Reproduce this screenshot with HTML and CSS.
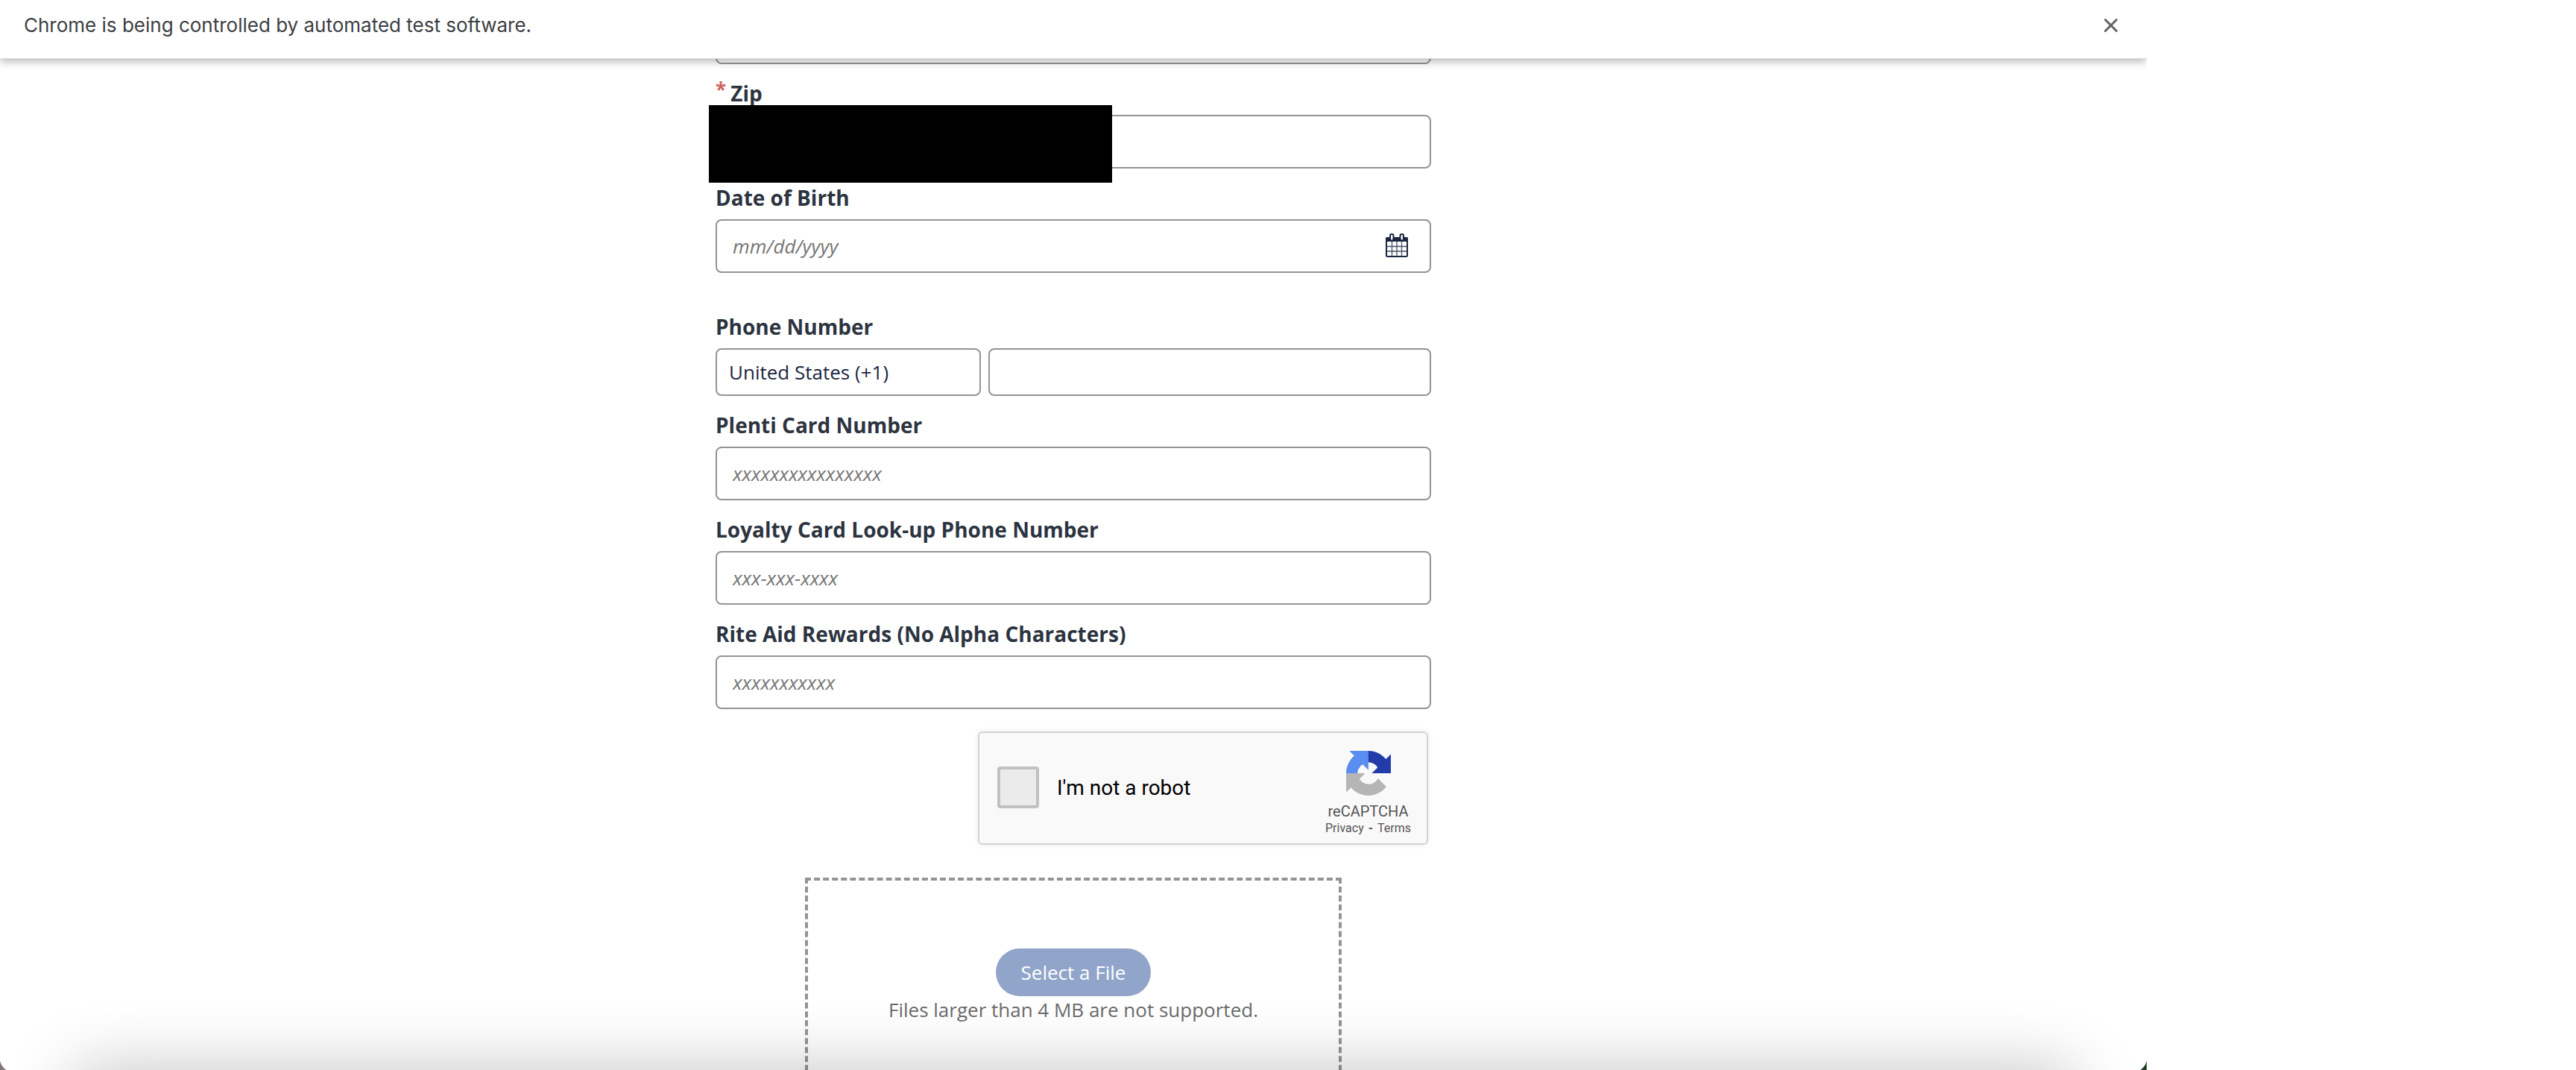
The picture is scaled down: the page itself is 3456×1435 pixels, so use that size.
FILE: index.html
```
<!DOCTYPE html>
<html lang="en">
<head>
<meta charset="utf-8">
<meta name="viewport" content="width=device-width, initial-scale=1">
<title>Contact form</title>
<link rel="stylesheet" href="styles.css">
</head>
<body>
<div class="window">
  <header class="infobar">
    <span>Chrome is being controlled by automated test software.</span>
    <button class="infobar-close" type="button" aria-label="Close">
      <svg width="20" height="20" viewBox="0 0 20 20" fill="none" stroke="#5f6368" stroke-width="3" stroke-linecap="round" aria-hidden="true"><path d="M2.5 2.5l15 15M17.5 2.5l-15 15"/></svg>
    </button>
  </header>

  <main class="page">
    <form class="form">
      <input class="field" type="text" aria-label="State">

      <label class="label" for="zip"><span class="required">*</span>Zip</label>
      <div class="control">
        <input class="field" id="zip" type="text" required>
        <div class="redaction"></div>
      </div>

      <label class="label" for="dob">Date of Birth</label>
      <div class="control">
        <input class="field" id="dob" type="text" placeholder="mm/dd/yyyy">
        <button class="calendar-button" type="button" aria-label="Open calendar">
          <svg width="30" height="32" viewBox="0 0 30 32" aria-hidden="true">
            <rect x="1" y="6" width="28" height="25" rx="1.5" fill="#fff" stroke="#1c2541" stroke-width="2"/>
            <path d="M0 11V7a2 2 0 0 1 2-2h26a2 2 0 0 1 2 2v4z" fill="#1c2541"/>
            <path d="M8.5 11v19M15 11v19M21.5 11v19M2 17.5h26M2 24h26" stroke="#1c2541" stroke-opacity=".8" stroke-width="1.3"/>
            <rect x="6" y="1" width="4.5" height="8.5" rx="2.2" fill="#fff" stroke="#1c2541" stroke-width="2"/>
            <rect x="19.5" y="1" width="4.5" height="8.5" rx="2.2" fill="#fff" stroke="#1c2541" stroke-width="2"/>
          </svg>
        </button>
      </div>

      <label class="label label-spaced" for="phone">Phone Number</label>
      <div class="phone-row">
        <select class="field field-short country" aria-label="Country code">
          <option>United States (+1)</option>
        </select>
        <input class="field field-short" id="phone" type="tel">
      </div>

      <label class="label" for="plenti">Plenti Card Number</label>
      <input class="field" id="plenti" type="text" placeholder="xxxxxxxxxxxxxxxx">

      <label class="label" for="loyalty">Loyalty Card Look-up Phone Number</label>
      <input class="field" id="loyalty" type="text" placeholder="xxx-xxx-xxxx">

      <label class="label" for="rewards">Rite Aid Rewards (No Alpha Characters)</label>
      <input class="field" id="rewards" type="text" placeholder="xxxxxxxxxxx">

      <div class="captcha">
        <input class="captcha-box" id="robot" type="checkbox">
        <label class="captcha-label" for="robot">I'm not a robot</label>
        <div class="captcha-brand">
          <svg width="60" height="60" viewBox="0 0 64 64" aria-hidden="true">
            <path fill="#233ba8" d="M64 31.955l-.033-1.370V4.687l-7.160 7.160C50.948 4.674 42.033.093 32.050.093c-10.400 0-19.622 4.960-25.458 12.640l11.736 11.860a15.550 15.550 0 0 1 4.754-5.334c2.050-1.600 4.952-2.906 8.968-2.906.485 0 .860.057 1.135.163 4.976.393 9.288 3.140 11.828 7.124l-8.307 8.307L64 31.953"/>
            <path fill="#5a8df0" d="M31.862.094l-1.370.033H4.594l7.160 7.160C4.580 13.147 0 22.060 0 32.046c0 10.400 4.960 19.622 12.640 25.458L24.500 45.768a15.550 15.550 0 0 1-5.334-4.754c-1.600-2.050-2.906-4.952-2.906-8.968 0-.485.057-.860.163-1.135.393-4.976 3.140-9.288 7.124-11.828l8.307 8.307L31.860.095"/>
            <path fill="#b5b5b5" d="M.001 32.045l.033 1.370v25.898l7.160-7.160c5.860 7.173 14.774 11.754 24.760 11.754 10.400 0 19.622-4.960 25.458-12.640l-11.736-11.860a15.550 15.550 0 0 1-4.754 5.334c-2.050 1.600-4.952 2.906-8.968 2.906-.485 0-.860-.057-1.135-.163-4.976-.393-9.288-3.140-11.828-7.124l8.307-8.307c-10.522.040-22.400.066-27.295-.005"/>
          </svg>
          <span class="captcha-name">reCAPTCHA</span>
          <span class="captcha-links"><a href="#privacy">Privacy</a><b>-</b><a href="#terms">Terms</a></span>
        </div>
      </div>

      <section class="dropzone">
        <button class="select-file" type="button">Select a File</button>
        <p class="hint">Files larger than 4 MB are not supported.</p>
      </section>
    </form>
  </main>

  <div class="bottom-shade"></div>
  <div class="corner corner-left"></div>
  <div class="corner corner-right"></div>
</div>
</body>
</html>
```

FILE: styles.css
```
* {
  box-sizing: border-box;
}

body {
  margin: 0;
  background: #fff;
  color: #2c3440;
  font-family: "Open Sans", "Noto Sans", sans-serif;
  font-size: 26px;
  line-height: 40px;
}

.window {
  position: relative;
  width: 83.3333%;
  height: 100vh;
  overflow: hidden;
}

.infobar {
  position: relative;
  z-index: 1;
  display: flex;
  align-items: center;
  justify-content: space-between;
  padding: 14px 32px 24px;
  background: #fff;
  border-bottom: 1px solid #dadcdb;
  box-shadow: 0 4px 10px rgba(40, 50, 45, 0.32);
  color: #3c4043;
  font-family: Inter, "Liberation Sans", sans-serif;
}

.infobar-close {
  display: flex;
  padding: 6px;
  border: 0;
  background: none;
}

.page {
  display: flex;
  justify-content: center;
}

.form {
  display: flex;
  flex-direction: column;
  width: 33.3333%;
  min-width: 600px;
  margin-top: -65px;
}

.label {
  padding: 19px 0 9px;
  font-size: 28px;
  font-weight: bold;
}

.label-spaced {
  padding-top: 52px;
}

.required {
  margin-right: 6px;
  color: #d0605e;
  font-size: 26px;
  line-height: 0;
  vertical-align: 6px;
}

.control {
  position: relative;
}

.field {
  display: block;
  width: 100%;
  height: 72px;
  margin: 0;
  padding: 0 21px;
  border: 2px solid #949494;
  border-radius: 8px;
  background: #fff;
  color: #1c2541;
  font: inherit;
}

.field::placeholder {
  color: #767676;
  font-style: italic;
  opacity: 1;
}

.field-short {
  height: 64px;
  padding: 0 16px;
}

.redaction {
  position: absolute;
  top: -13px;
  left: -9px;
  width: 541px;
  height: 104px;
  background: #000;
}

.calendar-button {
  position: absolute;
  top: 0;
  right: 31px;
  display: flex;
  align-items: center;
  height: 100%;
  padding: 0 0 2px;
  border: 0;
  background: none;
}

.phone-row {
  display: grid;
  grid-template-columns: 3fr 5fr;
  gap: 10px;
}

.country {
  appearance: none;
}

.captcha {
  display: flex;
  align-items: center;
  align-self: flex-end;
  width: 604px;
  height: 152px;
  margin: 30px 4px 44px 0;
  padding: 0 21px 0 24px;
  border: 2px solid #d3d3d3;
  border-radius: 6px;
  background: #f9f9f9;
  box-shadow: 0 0 8px rgba(0, 0, 0, 0.08);
  font-family: Roboto, "Liberation Sans", sans-serif;
}

.captcha-box {
  appearance: none;
  width: 56px;
  height: 56px;
  margin: 0 24px 2px 0;
  border: 4px solid #c1c1c1;
  border-radius: 4px;
  background: #ebebeb;
}

.captcha-label {
  color: #000;
  font-size: 28px;
}

.captcha-brand {
  display: flex;
  flex-direction: column;
  align-items: center;
  margin: 14px 0 0 auto;
  color: #555;
}

.captcha-name {
  margin-top: 8px;
  font-size: 20px;
  line-height: 26px;
}

.captcha-links {
  display: flex;
  gap: 6px;
  font-size: 16px;
  line-height: 20px;
}

.captcha-links a {
  color: inherit;
  text-decoration: none;
}

.dropzone {
  display: flex;
  flex-direction: column;
  align-items: center;
  align-self: center;
  width: 75%;
  padding: 91px 24px 96px;
  border: 4px dashed #949494;
}

.select-file {
  height: 64px;
  padding: 0 34px;
  border: 0;
  border-radius: 32px;
  background: #90a5c9;
  color: #fff;
  font: inherit;
}

.hint {
  margin: 0;
  color: #6b6b6b;
  line-height: 36px;
}

.bottom-shade {
  position: absolute;
  top: 100%;
  right: 100px;
  left: 100px;
  height: 200px;
  box-shadow: 0 0 90px rgba(0, 0, 0, 0.24);
}

.corner {
  position: absolute;
  bottom: -3px;
  width: 20px;
  height: 20px;
}

.corner-left {
  left: 0;
  background: radial-gradient(circle at 100% 0, transparent 20px, #85787b 21px);
}

.corner-right {
  right: 0;
  background: radial-gradient(circle at 0 0, transparent 20px, #1f3a22 21px);
}
```
